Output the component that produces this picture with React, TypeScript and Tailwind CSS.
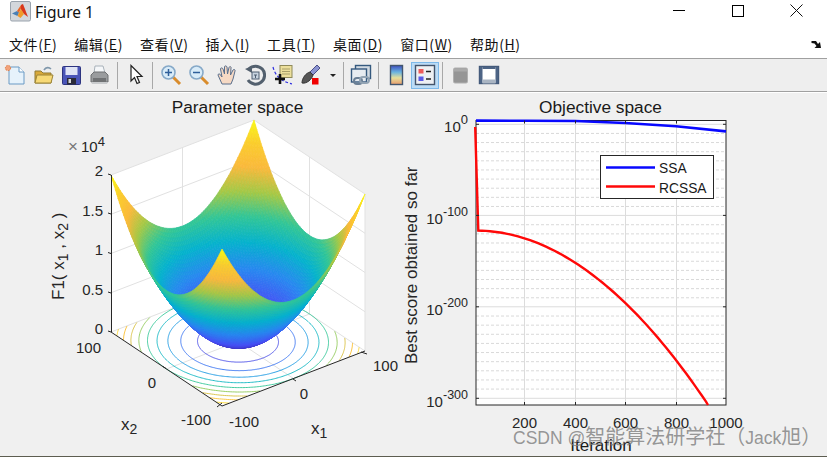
import React, { useMemo } from 'react';

type Rgb = [number, number, number];

const PARULA: Rgb[] = [
  [62, 38, 168],
  [70, 80, 245],
  [40, 135, 240],
  [5, 178, 205],
  [50, 198, 150],
  [165, 200, 70],
  [250, 185, 60],
  [250, 205, 45],
  [249, 251, 20],
];

const parula = (t: number) => {
  const v = Math.min(Math.max(t, 0), 1) * (PARULA.length - 1);
  const i = Math.min(Math.floor(v), PARULA.length - 2);
  const f = v - i;
  const c = PARULA[i].map((a, k) => Math.round(a + (PARULA[i + 1][k] - a) * f));
  return `rgb(${c[0]},${c[1]},${c[2]})`;
};

// x1, x2 in -100..100, z in 0..20000 -> screen position
const project = (x1: number, x2: number, z: number): [number, number] => [
  222 + ((x1 + 100) / 200) * 143 - ((x2 + 100) / 200) * 111,
  407 - ((x1 + 100) / 200) * 55 - ((x2 + 100) / 200) * 74 - (z / 20000) * 157,
];

const pts = (list: [number, number][]) => list.map((p) => `${p[0].toFixed(1)},${p[1].toFixed(1)}`).join(' ');

const Surface = () => {
  const cells = useMemo(() => {
    const n = 80;
    const step = 200 / n;
    const out: { p: string; c: string }[] = [];
    for (let i = n - 1; i >= 0; i--) {
      for (let j = n - 1; j >= 0; j--) {
        const a = -100 + i * step;
        const b = -100 + j * step;
        const h = (u: number, v: number) => project(u, v, u * u + v * v);
        const mid = (a + step / 2) ** 2 + (b + step / 2) ** 2;
        out.push({
          p: pts([h(a, b), h(a + step, b), h(a + step, b + step), h(a, b + step)]),
          c: parula(mid / 20000),
        });
      }
    }
    return out;
  }, []);
  return (
    <g>
      {cells.map((cell, i) => (
        <polygon key={i} points={cell.p} fill={cell.c} stroke={cell.c} strokeWidth={0.7} />
      ))}
    </g>
  );
};

const Contours = () => {
  const levels = [2000, 4000, 6000, 8000, 10000, 12000, 14000, 16000, 18000];
  const lines: { d: string; c: string }[] = [];
  levels.forEach((lv) => {
    const r = Math.sqrt(lv);
    let d = '';
    let pen = false;
    for (let k = 0; k <= 360; k++) {
      const x = r * Math.cos((k * Math.PI) / 180);
      const y = r * Math.sin((k * Math.PI) / 180);
      if (Math.abs(x) > 100 || Math.abs(y) > 100) {
        pen = false;
        continue;
      }
      const p = project(x, y, 0);
      d += `${pen ? 'L' : 'M'}${p[0].toFixed(1)} ${p[1].toFixed(1)}`;
      pen = true;
    }
    lines.push({ d, c: parula(lv / 20000) });
  });
  return (
    <g fill="none" strokeWidth={0.9}>
      {lines.map((l, i) => (
        <path key={i} d={l.d} stroke={l.c} />
      ))}
    </g>
  );
};

const GRID = '#e1e1e1';
const INK = '#262626';

const Seg = ({ a, b, c, w = 1 }: { a: [number, number]; b: [number, number]; c: string; w?: number }) => (
  <line x1={a[0]} y1={a[1]} x2={b[0]} y2={b[1]} stroke={c} strokeWidth={w} />
);

const ParameterPlot = () => {
  const zs = [5000, 10000, 15000];
  return (
    <svg viewBox="0 94 400 362" className="w-[400px] h-[362px] block">
      <polygon
        points={pts([project(-100, 100, 20000), project(100, 100, 20000), project(100, -100, 20000), project(100, -100, 0), project(-100, -100, 0), project(-100, 100, 0)])}
        fill="#ffffff"
      />
      {/* back walls and floor grid */}
      <Seg a={project(-100, 100, 20000)} b={project(100, 100, 20000)} c={GRID} />
      <Seg a={project(100, 100, 20000)} b={project(100, -100, 20000)} c={GRID} />
      <Seg a={project(100, -100, 20000)} b={project(100, -100, 0)} c={GRID} />
      <Seg a={project(100, 100, 20000)} b={project(100, 100, 0)} c={GRID} />
      {zs.map((z) => (
        <g key={z}>
          <Seg a={project(-100, 100, z)} b={project(100, 100, z)} c={GRID} />
          <Seg a={project(100, 100, z)} b={project(100, -100, z)} c={GRID} />
        </g>
      ))}
      <Seg a={project(0, 100, 0)} b={project(0, 100, 20000)} c={GRID} />
      <Seg a={project(100, 0, 0)} b={project(100, 0, 20000)} c={GRID} />
      <Seg a={project(-100, 100, 0)} b={project(100, 100, 0)} c={GRID} />
      <Seg a={project(100, 100, 0)} b={project(100, -100, 0)} c={GRID} />
      <Seg a={project(0, -100, 0)} b={project(0, 100, 0)} c={GRID} />
      <Seg a={project(-100, 0, 0)} b={project(100, 0, 0)} c={GRID} />
      <Contours />
      <Surface />
      {/* axes */}
      <Seg a={[111.5, 176]} b={[111.5, 333]} c={INK} />
      <Seg a={project(-100, 100, 0)} b={project(-100, -100, 0)} c={INK} />
      <Seg a={project(-100, -100, 0)} b={project(100, -100, 0)} c={INK} />
      {[176, 215, 254.5, 294, 333].map((y) => (
        <Seg key={y} a={[108, y - 1]} b={[111, y]} c={INK} />
      ))}
      <Seg a={[163, 367.5]} b={[166, 369.5]} c={INK} />
      <Seg a={[217, 408]} b={[222, 404]} c={INK} />
      <Seg a={[293, 380]} b={[296, 382]} c={INK} />
      <Seg a={[361, 353]} b={[367, 355]} c={INK} />

      <g fontSize={15} fill={INK}>
        <text x={237.5} y={114} fontSize={17.3} fill="#1a1a1a" textAnchor="middle">Parameter space</text>
        <text x={68} y={153} fontSize={17} fill="#777777">×</text>
        <text x={81} y={153} fontSize={15}>10<tspan dy={-6} fontSize={13}>4</tspan></text>
        <text x={103} y={177} textAnchor="end">2</text>
        <text x={103} y={217} textAnchor="end">1.5</text>
        <text x={103} y={256} textAnchor="end">1</text>
        <text x={103} y={296} textAnchor="end">0.5</text>
        <text x={103} y={335} textAnchor="end">0</text>
        <text x={101} y={354} textAnchor="end">100</text>
        <text x={152} y={389} textAnchor="middle">0</text>
        <text x={211} y={426} textAnchor="end">-100</text>
        <text x={229} y={428}>-100</text>
        <text x={304} y={400} textAnchor="middle">0</text>
        <text x={373} y={372}>100</text>
        <text x={121} y={431} fontSize={17}>x<tspan dy={4} fontSize={14}>2</tspan></text>
        <text x={311} y={435} fontSize={17}>x<tspan dy={4} fontSize={14}>1</tspan></text>
        <text transform="translate(64 301) rotate(-90)" fontSize={17}>
          F1( x<tspan dy={4} fontSize={14}>1</tspan><tspan dy={-4}> , x</tspan><tspan dy={4} fontSize={14}>2</tspan><tspan dy={-4}> )</tspan>
        </text>
      </g>
    </svg>
  );
};

const BLUE_LINE: [number, number][] = [
  [476, 121.6], [525, 121.8], [575, 122], [625, 124], [676, 127.2], [726, 132.4],
];

// the tail of the red curve is close to a parabola on the log scale
const redLine = () => {
  const out: [number, number][] = [[475.2, 128], [478.3, 231.6]];
  for (let x = 482; x <= 708; x += 4) {
    const d = x - 478.3;
    out.push([x, 231.6 + 0.0033 * d * d + Math.sin((d / 230) * Math.PI) * 1.2]);
  }
  out.push([708, 406]);
  return out;
};

const ObjectivePlot = () => {
  const ax = { l: 476, r: 726, t: 121.5, b: 406 };
  const xs = [524.5, 575.5, 625.5, 676.5];
  const major = [125.3, 216.4, 307.8, 399.3];
  const minor: number[] = [];
  for (let k = 0; k < 30; k++) {
    if (k % 10 === 0) continue;
    minor.push(125.3 + k * 9.13);
  }
  return (
    <svg viewBox="400 94 427 362" className="w-[427px] h-[362px] block">
      <rect x={ax.l} y={ax.t} width={ax.r - ax.l} height={ax.b - ax.t} fill="#ffffff" />
      {minor.map((y) => (
        <line key={y} x1={ax.l} x2={ax.r} y1={y} y2={y} stroke="#d9d9d9" strokeWidth={1} strokeDasharray="3 2" />
      ))}
      {major.map((y) => (
        <line key={y} x1={ax.l} x2={ax.r} y1={y} y2={y} stroke="#dcdcdc" />
      ))}
      {xs.map((x) => (
        <line key={x} x1={x} x2={x} y1={ax.t} y2={ax.b} stroke="#dcdcdc" />
      ))}
      <rect x={ax.l} y={ax.t} width={ax.r - ax.l} height={ax.b - ax.t} fill="none" stroke={INK} />
      <polyline points={pts(BLUE_LINE)} fill="none" stroke="#0808ff" strokeWidth={2.6} />
      <polyline points={pts(redLine())} fill="none" stroke="#ff0808" strokeWidth={2.4} />
      {xs.map((x) => (
        <g key={x}>
          <line x1={x} x2={x} y1={ax.b} y2={ax.b - 3} stroke={INK} />
          <line x1={x} x2={x} y1={ax.t} y2={ax.t + 3} stroke={INK} />
        </g>
      ))}
      {major.map((y) => (
        <g key={y}>
          <line x1={ax.l} x2={ax.l + 3} y1={y} y2={y} stroke={INK} />
          <line x1={ax.r} x2={ax.r - 3} y1={y} y2={y} stroke={INK} />
        </g>
      ))}
      <rect x={600.5} y={156.5} width={113} height={43} fill="#ffffff" stroke={INK} />
      <line x1={606} x2={655} y1={168.5} y2={168.5} stroke="#0808ff" strokeWidth={2.4} />
      <line x1={606} x2={655} y1={187.5} y2={187.5} stroke="#ff0808" strokeWidth={2.4} />
      <g fontSize={15} fill={INK}>
        <text x={600.5} y={114} fontSize={17.3} fill="#1a1a1a" textAnchor="middle">Objective space</text>
        <text x={659} y={173.5} fontSize={13.8} fill="#1a1a1a">SSA</text>
        <text x={659} y={194} fontSize={13.8} fill="#1a1a1a">RCSSA</text>
        <text x={468} y={133} textAnchor="end">10<tspan dy={-8} fontSize={13}>0</tspan></text>
        <text x={468} y={225} textAnchor="end">10<tspan dy={-8} fontSize={12.5}>-100</tspan></text>
        <text x={468} y={316} textAnchor="end">10<tspan dy={-8} fontSize={12.5}>-200</tspan></text>
        <text x={468} y={408} textAnchor="end">10<tspan dy={-8} fontSize={12.5}>-300</tspan></text>
        <text x={524.5} y={429} textAnchor="middle">200</text>
        <text x={575.5} y={429} textAnchor="middle">400</text>
        <text x={625.5} y={429} textAnchor="middle">600</text>
        <text x={676.5} y={429} textAnchor="middle">800</text>
        <text x={726} y={429} textAnchor="middle">1000</text>
        <text x={601} y={452} fontSize={17} fill="#1a1a1a" textAnchor="middle">Iteration</text>
        <text transform="translate(417 365) rotate(-90)" fontSize={17}>Best score obtained so far</text>
      </g>
    </svg>
  );
};

const MatlabLogo = () => (
  <svg width="21" height="21" viewBox="0 0 21 21">
    <rect x="0.5" y="0.5" width="20" height="19.5" rx="1.5" fill="#d3d7dc" stroke="#9aa3ad" />
    <path d="M2 12.5 L7 10 L9 11.5 L7.5 15 Z" fill="#4a7fb5" />
    <path d="M7 10 L11 4 L13 3.5 L9 11.5 Z" fill="#e8662a" />
    <path d="M11 4 L13 3 L18 16 L14 13 L11 9 Z" fill="#d9381e" />
    <path d="M7.5 15 L9 11.5 L11 8 L14 13 L10.5 17 Z" fill="#f09a2a" />
  </svg>
);

const Icon = ({ children }: { children: React.ReactNode }) => (
  <svg width="22" height="22" viewBox="0 0 22 22">{children}</svg>
);

const NewIcon = () => (
  <Icon>
    <path d="M5 3 H15 L20 8 V20 H5 Z" fill="#e6f2fb" stroke="#6b9ac4" />
    <path d="M15 3 V8 H20" fill="#ffffff" stroke="#6b9ac4" />
    <circle cx="4" cy="4" r="2.6" fill="#f2a27a" stroke="#e07840" strokeDasharray="1.5 1" />
  </Icon>
);
const OpenIcon = () => (
  <Icon>
    <path d="M3 7 H9 L11 9 H19 V19 H3 Z" fill="#d9a93a" stroke="#8f7a35" />
    <path d="M3 19 L5 11 H21 L19 19 Z" fill="#f7d976" stroke="#9c8436" />
    <path d="M12 6 C14 3 17 3 19 5" fill="none" stroke="#7f97ab" strokeWidth="1.6" />
  </Icon>
);
const SaveIcon = () => (
  <Icon>
    <rect x="2.5" y="2.5" width="18" height="18" rx="1" fill="#4a55b8" stroke="#2d3480" />
    <rect x="5.5" y="3" width="12" height="8" fill="#dfe4f5" />
    <rect x="7" y="14" width="9" height="6.5" fill="#2a2a38" />
    <rect x="8.5" y="15" width="2.5" height="4" fill="#d7d7d7" />
  </Icon>
);
const PrintIcon = () => (
  <Icon>
    <path d="M7 2 H15 L17 9 H6 Z" fill="#f5f7f9" stroke="#a9b2ba" />
    <path d="M3 11 L6 8 H17 L20 11 V18 H3 Z" fill="#9a9c9e" stroke="#6f7173" />
    <rect x="5" y="14" width="13" height="4" fill="#707274" />
    <path d="M3 18 H20 L19 20 H4 Z" fill="#c9cbcd" />
  </Icon>
);
const ArrowIcon = () => (
  <Icon>
    <path d="M5 1.5 V17 L8.5 13.5 L11 19.5 L13.5 18.5 L11 12.5 H16 Z" fill="#ffffff" stroke="#222222" strokeWidth="1.2" />
  </Icon>
);
const ZoomIcon = ({ minus }: { minus?: boolean }) => (
  <Icon>
    <line x1="13" y1="13" x2="20" y2="20" stroke="#d98c2c" strokeWidth="3" />
    <circle cx="8.5" cy="8.5" r="6.5" fill="#d8ebf8" stroke="#86a9c8" strokeWidth="1.6" />
    <line x1="5" y1="8.5" x2="12" y2="8.5" stroke="#2f5f9a" strokeWidth="1.5" />
    {!minus && <line x1="8.5" y1="5" x2="8.5" y2="12" stroke="#2f5f9a" strokeWidth="1.5" />}
  </Icon>
);
const PanIcon = () => (
  <Icon>
    <path
      d="M6 20 L2 11 C2 9.5 4 9.5 4.5 11 L6 13 L4.5 5 C4.5 3.5 6.5 3.5 7 5 L8.5 10 L8.5 3 C8.5 1.5 10.5 1.5 11 3 L11.5 10 L13 3.5 C13.5 2 15.5 2.5 15 4 L14.5 11 L17 6 C18 5 19.5 5.5 19 7 L17 15 L15 20 Z"
      fill="#f6d9c4"
      stroke="#5a6f8c"
    />
  </Icon>
);
const RotateIcon = () => (
  <Icon>
    <path d="M5 5 A9 9 0 1 1 4 16" fill="none" stroke="#53606e" strokeWidth="3" />
    <path d="M1 5 L8 2 L8 9 Z" fill="#53606e" />
    <rect x="8" y="8" width="7" height="7" fill="#c7d3df" stroke="#4f5f72" />
    <path d="M10 11 H13 M11.5 11 V14" stroke="#4f5f72" />
  </Icon>
);
const CursorIcon = () => (
  <Icon>
    <rect x="8" y="1.5" width="12" height="12" fill="#ecdf9c" stroke="#8f8a5a" />
    <path d="M10 5 H18 M10 7.5 H18 M10 10 H18" stroke="#a9a06a" />
    <path d="M1 3 C3 11 8 17 20 20" fill="none" stroke="#2d2de0" strokeDasharray="3 2" strokeWidth="1.2" />
    <path d="M8 10 V20 M3 15 H13" stroke="#111111" strokeWidth="2.6" />
  </Icon>
);
const BrushIcon = () => (
  <Icon>
    <path d="M11 8 L18 1 L21 4 L14 11 Z" fill="#8a93d0" stroke="#4a4f88" />
    <path d="M3 19 C3 14 7 9 11 8 L14 11 C13 15 8 20 3 19 Z" fill="#555555" stroke="#333333" />
    <rect x="13" y="14" width="6.5" height="6.5" fill="#f00000" />
  </Icon>
);
const LinkIcon = () => (
  <Icon>
    <rect x="5.5" y="1.5" width="15" height="13" fill="#d2dae2" stroke="#35597e" strokeWidth="1.4" />
    <rect x="1.5" y="5" width="15" height="13" fill="#e6ebf0" stroke="#35597e" strokeWidth="1.4" />
    <rect x="4" y="14" width="8" height="6" rx="3" fill="none" stroke="#6a7f95" strokeWidth="2" />
    <rect x="10" y="13" width="9" height="6" rx="3" fill="none" stroke="#92a3b3" strokeWidth="2" />
  </Icon>
);
const ColorbarIcon = () => (
  <Icon>
    <defs>
      <linearGradient id="cbar" x1="0" y1="0" x2="0" y2="1">
        <stop offset="0" stopColor="#3f4fc0" />
        <stop offset="0.35" stopColor="#69b4e0" />
        <stop offset="0.65" stopColor="#e5df9a" />
        <stop offset="1" stopColor="#e89b6c" />
      </linearGradient>
    </defs>
    <rect x="4.5" y="1.5" width="12" height="19" fill="url(#cbar)" stroke="#43566e" strokeWidth="1.4" />
  </Icon>
);
const LegendIcon = () => (
  <Icon>
    <rect x="1.5" y="1.5" width="19" height="19" fill="#eef0f3" stroke="#44546c" strokeWidth="1.4" />
    <rect x="4.5" y="5" width="5" height="4.5" fill="#ee5a5a" />
    <rect x="4.5" y="12.5" width="5" height="4.5" fill="#5a5ae8" />
    <path d="M12 7.5 H17 M12 15 H17" stroke="#222222" strokeWidth="1.5" />
  </Icon>
);
const PanelIcon = () => (
  <Icon>
    <rect x="3.5" y="4" width="14" height="15" rx="1.5" fill="#959595" stroke="#b0b0b0" />
    <rect x="4" y="4.5" width="13" height="3" fill="#a9a9a9" />
  </Icon>
);
const WindowIcon = () => (
  <Icon>
    <rect x="1.5" y="2.5" width="19" height="17" fill="#ffffff" stroke="#3d5272" strokeWidth="1.4" />
    <rect x="1.5" y="2.5" width="3" height="17" fill="#4d6485" />
    <rect x="17.5" y="2.5" width="3" height="17" fill="#4d6485" />
    <rect x="4.5" y="2.5" width="13" height="2.5" fill="#4d6485" />
    <rect x="4.5" y="15.5" width="13" height="4" fill="#aab5c3" />
  </Icon>
);

const ToolButton = ({ children, selected }: { children: React.ReactNode; selected?: boolean }) => (
  <div
    className={
      selected
        ? 'w-7 h-[27px] flex items-center justify-center bg-[#bcdcf6] border border-[#7db9ea]'
        : 'w-7 h-[27px] flex items-center justify-center'
    }
  >
    {children}
  </div>
);

const MENUS: [string, string][] = [
  ['文件', 'F'],
  ['编辑', 'E'],
  ['查看', 'V'],
  ['插入', 'I'],
  ['工具', 'T'],
  ['桌面', 'D'],
  ['窗口', 'W'],
  ['帮助', 'H'],
];

export default function App() {
  return (
    <div className="w-[827px] h-[457px] overflow-hidden bg-white flex flex-col relative font-['Liberation_Sans','Noto_Sans_CJK_SC',sans-serif] text-[#111]">
      <div className="h-[29px] flex items-start bg-white">
        <div className="ml-[10px] mt-[1px]">
          <MatlabLogo />
        </div>
        <span className="ml-[4px] mt-[1px] text-[15.5px] leading-[22px] font-['Noto_Sans',sans-serif] text-[#111]">Figure 1</span>
        <div className="ml-auto flex mr-[2px]">
          <div className="w-[60px] h-[21px] flex items-center justify-center">
            <div className="w-[12px] h-px bg-black" />
          </div>
          <div className="w-[58px] h-[21px] flex items-center justify-center">
            <div className="w-[12px] h-[12px] border border-black" />
          </div>
          <div className="w-[58px] h-[21px] flex items-center justify-center">
            <svg width="13" height="13" viewBox="0 0 13 13">
              <path d="M0.5 0.5 L12.5 12.5 M12.5 0.5 L0.5 12.5" stroke="#111" fill="none" />
            </svg>
          </div>
        </div>
      </div>

      <div className="h-[30px] flex items-center pl-[9px] gap-[17px] text-[14px] tracking-[0.6px] font-['Noto_Sans_CJK_SC','Noto_Sans',sans-serif] border-b border-[#a0a0a0] relative">
        {MENUS.map(([label, key]) => (
          <span key={key} className="whitespace-nowrap leading-[20px]">
            {label}(<span className="underline">{key}</span>)
          </span>
        ))}
        <svg className="absolute right-[5px] top-[11px]" width="11" height="9" viewBox="0 0 11 9">
          <path d="M0.5 1 L5 1 L7 4 L9 2 L10 8 L3.5 8 L5.5 6 L3.5 3.5 L0.5 3 Z" fill="#111" />
        </svg>
      </div>

      <div className="h-[33px] flex items-center bg-[#eeeeee] border-b border-[#a0a0a0] pl-[1px]">
        <ToolButton><NewIcon /></ToolButton>
        <ToolButton><OpenIcon /></ToolButton>
        <ToolButton><SaveIcon /></ToolButton>
        <ToolButton><PrintIcon /></ToolButton>
        <div className="w-px h-[27px] bg-[#a8a8a8] ml-[4px] mr-[5px]" />
        <ToolButton><ArrowIcon /></ToolButton>
        <div className="w-px h-[27px] bg-[#a8a8a8] ml-[1px] mr-[4px]" />
        <ToolButton><ZoomIcon /></ToolButton>
        <ToolButton><ZoomIcon minus /></ToolButton>
        <ToolButton><PanIcon /></ToolButton>
        <ToolButton><RotateIcon /></ToolButton>
        <ToolButton><CursorIcon /></ToolButton>
        <div className="w-[26px] flex justify-center"><BrushIcon /></div>
        <div className="ml-[7px] w-0 h-0 border-x-[3px] border-x-transparent border-t-[3px] border-t-[#222]" />
        <div className="w-px h-[27px] bg-[#a8a8a8] ml-[7px] mr-[3px]" />
        <ToolButton><LinkIcon /></ToolButton>
        <div className="w-px h-[27px] bg-[#a8a8a8] ml-[3px] mr-[4px]" />
        <ToolButton><ColorbarIcon /></ToolButton>
        <ToolButton selected><LegendIcon /></ToolButton>
        <div className="w-px h-[27px] bg-[#a8a8a8] ml-[3px] mr-[4px]" />
        <ToolButton><PanelIcon /></ToolButton>
        <ToolButton><WindowIcon /></ToolButton>
      </div>

      <div className="flex-1 bg-[#f0f0f0] border-t border-white border-b border-b-[#5d5d50] flex">
        <ParameterPlot />
        <ObjectivePlot />
      </div>

      <div className="absolute left-[513px] top-[423px] whitespace-nowrap text-[rgba(125,125,125,0.8)] text-[17.5px] leading-[28px]">
        CSDN @<span className="text-[20px]">智能算法研学社</span><span className="text-[20px]">（</span>Jack<span className="text-[20px]">旭）</span>
      </div>
    </div>
  );
}
